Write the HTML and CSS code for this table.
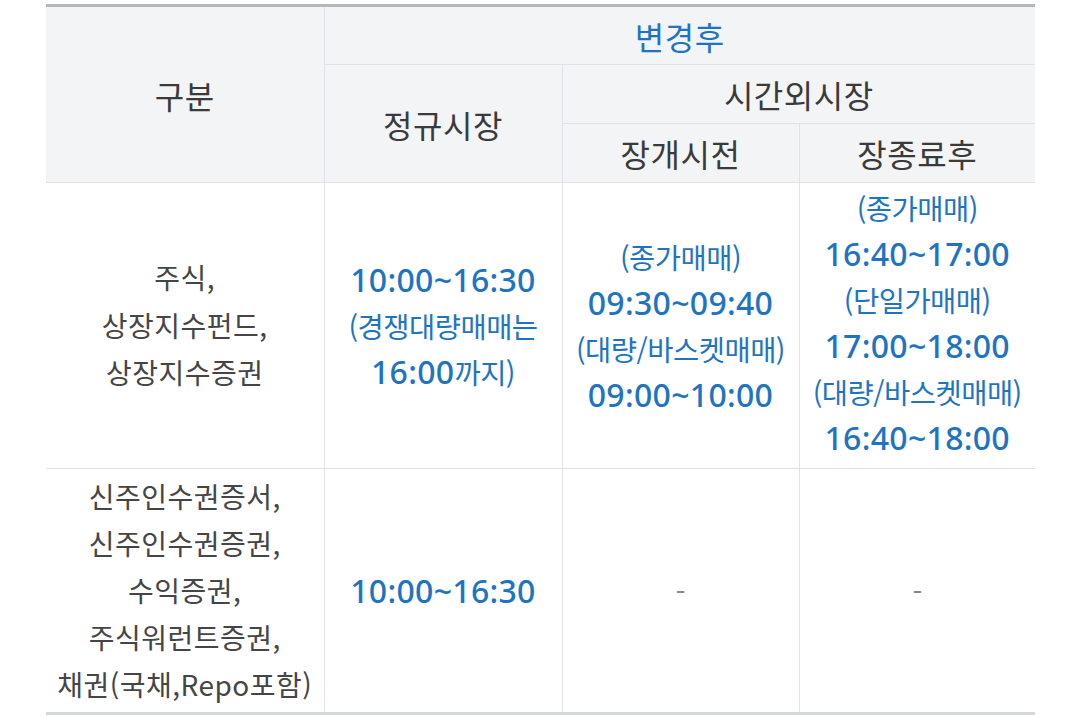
FILE: index.html
```html
<!DOCTYPE html>
<html lang="ko">

<head>
    <meta charset="UTF-8">
    <title>매매거래시간 변경</title>
    <link rel="stylesheet" href="styles.css">
</head>

<body>
    <table class="time-table">
        <colgroup>
            <col class="col-type">
            <col class="col-regular">
            <col class="col-pre">
            <col class="col-post">
        </colgroup>
        <thead>
            <tr class="head-row">
                <th rowspan="3">구분</th>
                <th colspan="3" class="blue">변경후</th>
            </tr>
            <tr class="head-row">
                <th rowspan="2">정규시장</th>
                <th colspan="2">시간외시장</th>
            </tr>
            <tr class="head-row">
                <th>장개시전</th>
                <th>장종료후</th>
            </tr>
        </thead>
        <tbody>
            <tr class="row-stock">
                <td class="type">주식,<br>상장지수펀드,<br>상장지수증권</td>
                <td class="blue">
                    <span class="num">10:00~16:30</span><br>
                    <span class="note">(경쟁대량매매는</span><br>
                    <span class="num">16:00</span><span class="note">까지)</span>
                </td>
                <td class="blue">
                    <span class="note">(종가매매)</span><br>
                    <span class="num">09:30~09:40</span><br>
                    <span class="note">(대량/바스켓매매)</span><br>
                    <span class="num">09:00~10:00</span>
                </td>
                <td class="blue">
                    <span class="note">(종가매매)</span><br>
                    <span class="num">16:40~17:00</span><br>
                    <span class="note">(단일가매매)</span><br>
                    <span class="num">17:00~18:00</span><br>
                    <span class="note">(대량/바스켓매매)</span><br>
                    <span class="num">16:40~18:00</span>
                </td>
            </tr>
            <tr class="row-etc">
                <td class="type">신주인수권증서,<br>신주인수권증권,<br>수익증권,<br>주식워런트증권,<br>채권(국채,Repo포함)</td>
                <td class="blue"><span class="num">10:00~16:30</span></td>
                <td class="dash">-</td>
                <td class="dash">-</td>
            </tr>
        </tbody>
    </table>
</body>

</html>
```

FILE: styles.css
```css
* {
    margin: 0;
    padding: 0;
    box-sizing: border-box;
}

body {
    background-color: #fff;
    font-family: "Noto Sans CJK KR", "Noto Sans", sans-serif;
    color: #444;
}

.time-table {
    margin: 4px 0 0 46px;
    width: 989px;
    table-layout: fixed;
    border-collapse: collapse;
    border-top: 3px solid #b4b6b8;
    border-bottom: 3px solid #d4d6d8;
}

.col-type {
    width: 278px;
}

.col-regular {
    width: 238px;
}

.col-pre {
    width: 237px;
}

.col-post {
    width: 236px;
}

.time-table th,
.time-table td {
    border: 1px solid #e0e2e5;
    text-align: center;
    vertical-align: middle;
}

.time-table tr > :first-child {
    border-left: none;
}

.time-table tr > :last-child {
    border-right: none;
}

.time-table th {
    background-color: #f3f4f6;
    font-size: 32px;
    font-weight: 400;
    color: #3a3a3a;
    line-height: 38px;
    letter-spacing: 0.5px;
}

.head-row {
    height: 59px;
}

.time-table th.blue {
    color: #1f74c2;
}

.time-table td {
    font-size: 28px;
    line-height: 46px;
}

.type {
    color: #454545;
    font-size: 30px;
    letter-spacing: 0.5px;
}

.time-table .row-stock .type {
    line-height: 47.5px;
}

.row-stock {
    height: 286px;
}

.row-etc {
    height: 245px;
}

.row-etc .type {
    line-height: 47px;
}

td.blue {
    color: #1f74c2;
}

.num {
    font-family: "Noto Sans", "Noto Sans CJK KR", sans-serif;
    font-size: 32px;
    font-weight: 500;
    letter-spacing: 0.3px;
}

.note {
    font-size: 28.5px;
    letter-spacing: -0.5px;
}

.time-table .row-stock td:last-child {
    line-height: 45px;
    vertical-align: top;
    padding-top: 2px;
}

.dash {
    color: #888;
    font-size: 24px;
}
```
